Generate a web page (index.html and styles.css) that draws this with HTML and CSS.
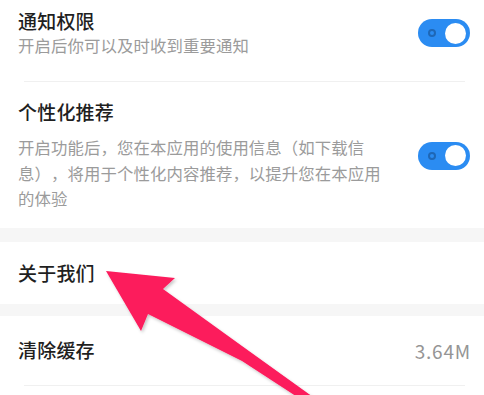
FILE: index.html
```html
<!DOCTYPE html>
<html lang="zh-CN">
<head>
<meta charset="utf-8">
<title>设置</title>
<link rel="stylesheet" href="styles.css">
</head>
<body>
<div class="screen">
  <section class="group">
    <div class="item item-first">
      <div class="text">
        <div class="title">通知权限</div>
        <div class="desc">开启后你可以及时收到重要通知</div>
      </div>
      <span class="switch"><span class="ring"></span><span class="knob"></span></span>
    </div>
    <div class="divider"></div>
    <div class="item item-second">
      <div class="text">
        <div class="title">个性化推荐</div>
        <div class="desc desc-long">开启功能后，您在本应用的使用信息（如下载信息），将用于个性化内容推荐，以提升您在本应用的体验</div>
      </div>
      <span class="switch"><span class="ring"></span><span class="knob"></span></span>
    </div>
  </section>
  <div class="gap gap-one"></div>
  <section class="group">
    <div class="row row-about"><span class="title">关于我们</span></div>
  </section>
  <div class="gap gap-two"></div>
  <section class="group">
    <div class="row row-cache"><span class="title">清除缓存</span><span class="value">3.64M</span></div>
    <div class="divider"></div>
  </section>
  <svg class="arrow" width="484" height="395" viewBox="0 0 484 395">
    <defs>
      <filter id="sh" x="-10%" y="-10%" width="130%" height="130%">
        <feDropShadow dx="1.5" dy="2" stdDeviation="1.5" flood-color="#000" flood-opacity="0.22"/>
      </filter>
    </defs>
    <polygon filter="url(#sh)" fill="#fc1b5c" points="106,271 175,278 163,289 242,346 320,402 305,402 242,361 148,314 141,331"/>
  </svg>
</div>
</body>
</html>
```

FILE: styles.css
```css
* { box-sizing: border-box; }
html, body { margin: 0; padding: 0; background: #fff; }
body {
  font-family: "Noto Sans CJK SC", "Noto Sans", sans-serif;
  color: #222;
  text-spacing-trim: space-all;
}
.screen {
  position: relative;
  width: 484px;
  height: 395px;
  overflow: hidden;
  background: #fff;
}
.group { background: #fff; }
.item {
  display: flex;
  align-items: center;
  gap: 31px;
  padding: 0 14px 0 18px;
}
.item-first { padding-top: 9px; padding-bottom: 24px; }
.item-second { padding-top: 18px; padding-bottom: 16px; }
.text { flex: 1; min-width: 0; }
.title {
  font-size: 19px;
  line-height: 24px;
  font-weight: 500;
  color: #1f1f1f;
  letter-spacing: 0.2px;
}
.desc {
  font-size: 16.4px;
  line-height: 24px;
  color: #9b9b9b;
  letter-spacing: 0.1px;
}
.desc-long { margin-top: 11px; line-height: 25.5px; }
.switch {
  position: relative;
  flex: 0 0 52px;
  width: 52px;
  height: 28px;
  border-radius: 14px;
  background: #2b8cf2;
}
.ring {
  position: absolute;
  left: 10px;
  top: 10px;
  width: 8px;
  height: 8px;
  border-radius: 50%;
  border: 2px solid #1e67b6;
}
.knob {
  position: absolute;
  right: 4px;
  top: 3.5px;
  width: 21px;
  height: 21px;
  border-radius: 50%;
  background: #fff;
}
.divider {
  height: 1px;
  background: #f0f0f0;
  margin: 0 19px 0 24px;
}
.gap { background: #f6f6f6; }
.gap-one { height: 14px; }
.gap-two { height: 12px; }
.row {
  display: flex;
  align-items: center;
  justify-content: space-between;
  padding: 0 13px 0 18px;
}
.row-about { height: 62px; }
.row-cache { height: 69px; }
.value {
  font-size: 19px;
  color: #959595;
  letter-spacing: 0.8px;
}
.arrow {
  position: absolute;
  left: 0;
  top: 0;
  pointer-events: none;
}
```
